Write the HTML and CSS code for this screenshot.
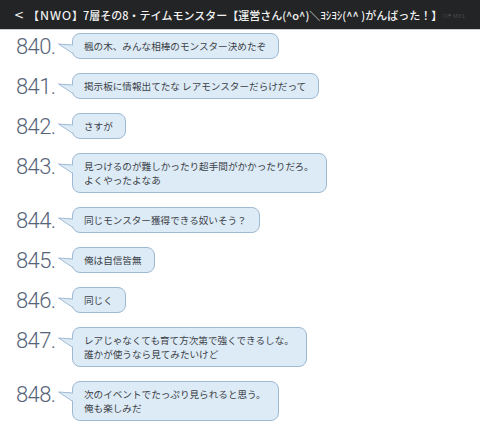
FILE: index.html
```html
<!DOCTYPE html>
<html lang="ja">
<head>
<meta charset="utf-8">
<link rel="stylesheet" href="styles.css">
</head>
<body>
<header class="topbar">
  <span class="back">&lt;</span>
  <span class="title">【ＮＷＯ】7層その8・テイムモンスター【運営さん(^o^)＼ﾖｼﾖｼ(^^ )がんばった！】</span>
  <span class="mark">ﾐｽﾃ MX1</span>
</header>
<main class="thread">
  <div class="post"><span class="num">840.</span><div class="bubble"><svg class="tail" width="16" height="14" viewBox="0 0 16 14"><polygon points="16,2 0.5,1 16,10.5" fill="#dcebf6"/><polyline points="15,2 0.5,1 15,10.5" fill="none" stroke="#9fb9d3" stroke-width="1"/></svg>楓の木、みんな相棒のモンスター決めたぞ</div></div>
  <div class="post"><span class="num">841.</span><div class="bubble"><svg class="tail" width="16" height="14" viewBox="0 0 16 14"><polygon points="16,2 0.5,1 16,10.5" fill="#dcebf6"/><polyline points="15,2 0.5,1 15,10.5" fill="none" stroke="#9fb9d3" stroke-width="1"/></svg>掲示板に情報出てたな レアモンスターだらけだって</div></div>
  <div class="post"><span class="num">842.</span><div class="bubble"><svg class="tail" width="16" height="14" viewBox="0 0 16 14"><polygon points="16,2 0.5,1 16,10.5" fill="#dcebf6"/><polyline points="15,2 0.5,1 15,10.5" fill="none" stroke="#9fb9d3" stroke-width="1"/></svg>さすが</div></div>
  <div class="post"><span class="num">843.</span><div class="bubble"><svg class="tail" width="16" height="14" viewBox="0 0 16 14"><polygon points="16,2 0.5,1 16,10.5" fill="#dcebf6"/><polyline points="15,2 0.5,1 15,10.5" fill="none" stroke="#9fb9d3" stroke-width="1"/></svg>見つけるのが難しかったり超手間がかかったりだろ。<br>よくやったよなあ</div></div>
  <div class="post"><span class="num">844.</span><div class="bubble"><svg class="tail" width="16" height="14" viewBox="0 0 16 14"><polygon points="16,2 0.5,1 16,10.5" fill="#dcebf6"/><polyline points="15,2 0.5,1 15,10.5" fill="none" stroke="#9fb9d3" stroke-width="1"/></svg>同じモンスター獲得できる奴いそう？</div></div>
  <div class="post"><span class="num">845.</span><div class="bubble"><svg class="tail" width="16" height="14" viewBox="0 0 16 14"><polygon points="16,2 0.5,1 16,10.5" fill="#dcebf6"/><polyline points="15,2 0.5,1 15,10.5" fill="none" stroke="#9fb9d3" stroke-width="1"/></svg>俺は自信皆無</div></div>
  <div class="post"><span class="num">846.</span><div class="bubble"><svg class="tail" width="16" height="14" viewBox="0 0 16 14"><polygon points="16,2 0.5,1 16,10.5" fill="#dcebf6"/><polyline points="15,2 0.5,1 15,10.5" fill="none" stroke="#9fb9d3" stroke-width="1"/></svg>同じく</div></div>
  <div class="post"><span class="num">847.</span><div class="bubble"><svg class="tail" width="16" height="14" viewBox="0 0 16 14"><polygon points="16,2 0.5,1 16,10.5" fill="#dcebf6"/><polyline points="15,2 0.5,1 15,10.5" fill="none" stroke="#9fb9d3" stroke-width="1"/></svg>レアじゃなくても育て方次第で強くできるしな。<br>誰かが使うなら見てみたいけど</div></div>
  <div class="post"><span class="num">848.</span><div class="bubble"><svg class="tail" width="16" height="14" viewBox="0 0 16 14"><polygon points="16,2 0.5,1 16,10.5" fill="#dcebf6"/><polyline points="15,2 0.5,1 15,10.5" fill="none" stroke="#9fb9d3" stroke-width="1"/></svg>次のイベントでたっぷり見られると思う。<br>俺も楽しみだ</div></div>
</main>
</body>
</html>
```
FILE: styles.css
```css
html, body {
  margin: 0;
  padding: 0;
  background: #ffffff;
}
body {
  width: 480px;
  height: 431px;
  overflow: hidden;
  font-family: "Noto Sans CJK JP", "Noto Sans", sans-serif;
}
.topbar {
  position: relative;
  height: 29px;
  background: #222426;
  border-bottom: 1px solid #c9cbcd;
  display: flex;
  align-items: center;
  padding-left: 14px;
  color: #f2f2f2;
  font-size: 11px;
  font-weight: 500;
  white-space: nowrap;
}
.back {
  margin-right: 4px;
  font-family: "DejaVu Sans", sans-serif;
  font-size: 12px;
}
.mark {
  position: absolute;
  left: 442px;
  top: 13px;
  font-size: 6px;
  color: #47494c;
  font-family: "Liberation Sans", sans-serif;
}
.thread {
  display: flex;
  flex-direction: column;
  gap: 14px;
  padding: 3px 0 0 16px;
}
.post {
  display: flex;
  align-items: flex-start;
}
.num {
  width: 56px;
  flex: none;
  font-family: Roboto, "Liberation Sans", sans-serif;
  font-weight: 300;
  font-size: 22px;
  line-height: 25px;
  padding-top: 1px;
  color: #56647a;
  letter-spacing: -0.6px;
}
.bubble {
  position: relative;
  background: #dcebf6;
  border: 1px solid #9fb9d3;
  border-radius: 8px;
  padding: 5px 12px 5px 11px;
  font-size: 9.6px;
  line-height: 14px;
  color: #3d4147;
  white-space: nowrap;
}
.tail {
  position: absolute;
  left: -15px;
  top: 9px;
  display: block;
}
```
